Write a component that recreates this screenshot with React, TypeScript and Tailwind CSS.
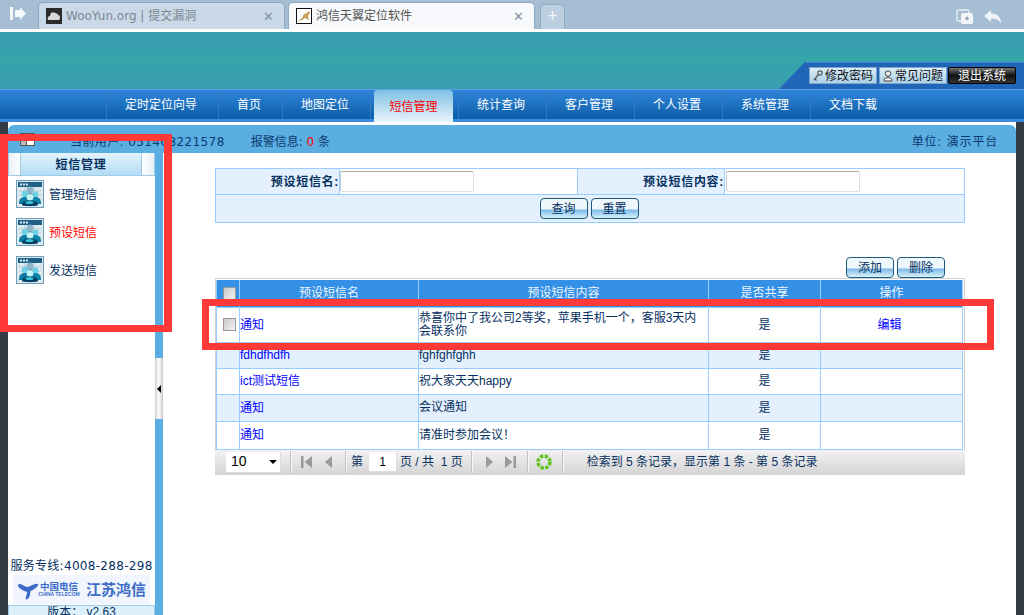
const font = "font-['Liberation_Sans','Noto_Sans_CJK_SC',sans-serif]"

const navItems = ["定时定位向导", "首页", "地图定位", "短信管理", "统计查询", "客户管理", "个人设置", "系统管理", "文档下载"]
const sideItems = ["管理短信", "预设短信", "发送短信"]
const rows = [
  { name: "通知", content: "恭喜你中了我公司2等奖，苹果手机一个，客服3天内会联系你", edit: true, h: "h-[35px]", bg: "bg-white" },
  { name: "fdhdfhdfh", content: "fghfghfghh", h: "h-[26px]", bg: "bg-[#e4f0fe]" },
  { name: "ict测试短信", content: "祝大家天天happy", h: "h-[26px]", bg: "bg-white" },
  { name: "通知", content: "会议通知", h: "h-[27px]", bg: "bg-[#e4f0fe]" },
  { name: "通知", content: "请准时参加会议！", h: "h-[28px]", bg: "bg-white" },
]

function MsnIcon() {
  return (
    <svg width="28" height="28" viewBox="0 0 28 28" className="shrink-0">
      <rect x="0.5" y="0.5" width="27" height="27" fill="#dce9ef" stroke="#6f9db8" />
      <rect x="2" y="2" width="24" height="5" fill="#1d5f86" />
      <rect x="4" y="3.500" width="2" height="2" fill="#ddeeff" />
      <rect x="7" y="3.500" width="2" height="2" fill="#ddeeff" />
      <rect x="10" y="3.500" width="2" height="2" fill="#ddeeff" />
      <path d="M3 11h22M3 15h22M3 19h22M9 7v18M18 7v18" stroke="#a9c4d2" strokeWidth="0.7" />
      <circle cx="14" cy="10" r="3.500" fill="#8db4c8" />
      <path d="M9 17c0-3 2-4 5-4s5 1 5 4z" fill="#6f9fb8" />
      <circle cx="9" cy="14" r="3.200" fill="#6fd0e4" />
      <path d="M3 24c0-5 2-7 6-7s6 2 6 7z" fill="#0b7da3" />
      <circle cx="19.500" cy="14.500" r="3" fill="#6fd0e4" />
      <path d="M14 24c0-5 2-7 5.500-7s5.500 2 5.500 7z" fill="#0a86a8" />
      <circle cx="14" cy="17.500" r="3.300" fill="#c6f5f8" />
      <path d="M6 25c0-3 3-4.500 8-4.500s8 1.500 8 4.500c0 1.500-16 1.500-16 0z" fill="#063f62" />
      <ellipse cx="13.500" cy="22.500" rx="4" ry="1.500" fill="#35c4d8" />
    </svg>
  )
}

function Checkbox() {
  return <span className="block w-[13px] h-[13px] border border-[#999999] bg-gradient-to-br from-[#c8c8c8] to-[#f4f4f4]" />
}

function Btn({ label }: { label: string }) {
  return (
    <button className="w-[48px] h-[21px] rounded-[4px] border border-[#1f5b7c] bg-gradient-to-b from-[#eef8fc] from-50% via-[#84bce8] via-60% to-[#d6f3fc] text-[12px] text-[#06305f] leading-none">
      {label}
    </button>
  )
}

function Tab({ title, active, icon }: { title: string; active?: boolean; icon: React.ReactNode }) {
  return (
    <div
      className={`w-[247px] h-[27px] rounded-t-[5px] flex items-center pl-[7px] pr-[10px] gap-[4px] text-[12px] font-['DejaVu_Sans','Noto_Sans_CJK_SC',sans-serif] border border-b-0 border-[#8fa9c2] ${
        active ? "bg-[#f7f9fc] text-[#555555]" : "bg-[#c9d9e7] text-[#7d8791]"
      }`}
    >
      {icon}
      <span className="flex-1 truncate">{title}</span>
      <span className="text-[13px] font-bold text-[#7f93a6] leading-none">✕</span>
    </div>
  )
}

function Sep() {
  return <span className="w-[2px] h-[22px] bg-[#f6f6f6] border-l border-[#c4c4c4] shrink-0" />
}

export default function App() {
  return (
    <div className={`relative w-[1024px] h-[615px] overflow-hidden flex flex-col bg-white ${font}`}>
      {/* browser tabs */}
      <div className="h-[32px] shrink-0 border-b-[3px] border-white bg-[#a6bed3] flex items-end pl-[38px] gap-[3px]">
        <svg width="18" height="16" viewBox="0 0 18 16" className="absolute left-[10px] top-[6px]">
          <rect x="0" y="1" width="3" height="13" fill="#f4f8fb" />
          <path d="M5 4h5V1l6 6.500L10 14v-3H5z" fill="#f4f8fb" />
        </svg>
        <Tab
          title="WooYun.org | 提交漏洞"
          icon={
            <svg width="16" height="16" viewBox="0 0 16 16" className="shrink-0">
              <rect width="16" height="16" fill="#2b2b2e" />
              <path d="M2 12c-1-3 1-4 2-4 0-3 3-5 5-3 2 0 3 1 3 2 2 0 3 3 1 5z" fill="#d8d8d8" />
            </svg>
          }
        />
        <Tab
          active
          title="鸿信天翼定位软件"
          icon={
            <svg width="16" height="16" viewBox="0 0 16 16" className="shrink-0">
              <rect x="0.5" y="0.5" width="15" height="15" fill="#fff" stroke="#111" />
              <path d="M2 13l4-3 2-4 3-1 1-2 2 2-2 3 1 4-2-1-2-1-3 2z" fill="#c9a15c" />
            </svg>
          }
        />
        <div className="w-[25px] h-[25px] ml-[2px] rounded-t-[5px] border border-b-0 border-[#8fa9c2] bg-[#bccfe0] text-[#f4f8fb] text-[18px] leading-[22px] text-center">
          +
        </div>
        <div className="ml-auto flex items-center gap-[10px] pr-[22px] pb-[4px]">
          <svg width="18" height="16" viewBox="0 0 18 16">
            <rect x="1" y="1" width="12" height="11" rx="1.500" fill="none" stroke="#e8eef4" strokeWidth="1.400" />
            <rect x="5" y="4" width="12" height="11" rx="1.500" fill="#f2f5f8" />
            <path d="M9 9.500h4M11 7.500v4" stroke="#7f8b96" />
          </svg>
          <svg width="18" height="14" viewBox="0 0 18 14">
            <path d="M0 6l7-6v3.500c6 0 10 3 10 10-2-4-5-5-10-5V12z" fill="#f0f4f8" />
          </svg>
        </div>
      </div>

      {/* teal header */}
      <div className="h-[57px] shrink-0 bg-gradient-to-b from-[#3b9cb4] via-[#35a5a9] to-[#3a9db2] flex justify-end items-end">
        <svg width="27" height="27" viewBox="0 0 27 27" className="shrink-0 block">
          <path d="M0 27L26 0h1v27z" fill="#1f66b8" />
        </svg>
        <div className="w-[218px] h-[27px] bg-[#1f66b8] border-t border-[#3f88d8] pt-[4px] pl-[3px] flex text-[12px] leading-[16px]">
          <div className="w-[68px] h-[17px] mr-[2px] flex items-center justify-center gap-[2px] border border-[#7fa6c8] bg-gradient-to-b from-[#d9edf8] to-[#abd0e8] text-[#111111]">
            <svg width="10" height="12" viewBox="0 0 10 12">
              <circle cx="7" cy="3" r="2.200" fill="none" stroke="#555" strokeWidth="1.200" />
              <path d="M5.500 4.500L1 10M2 9l1.500 1.500" stroke="#555" strokeWidth="1.200" fill="none" />
            </svg>
            修改密码
          </div>
          <div className="w-[68px] h-[17px] mr-[1px] flex items-center justify-center gap-[2px] border border-[#7fa6c8] bg-gradient-to-b from-[#d9edf8] to-[#abd0e8] text-[#111111]">
            <svg width="10" height="12" viewBox="0 0 10 12">
              <circle cx="5" cy="3.500" r="2.700" fill="#eee" stroke="#444" />
              <path d="M1 11c0-3 2-3.500 4-3.500S9 8 9 11z" fill="#eee" stroke="#444" />
            </svg>
            常见问题
          </div>
          <div className="w-[68px] h-[17px] flex items-center justify-center rounded-[2px] border border-black bg-gradient-to-b from-[#777777] via-[#111111] to-[#333333] text-white">
            退出系统
          </div>
        </div>
      </div>

      {/* nav */}
      <div className="h-[33px] shrink-0 border-t border-[#5f9fe6] border-b-[3px] border-b-[#3a8ae0] bg-gradient-to-b from-[#2f85da] to-[#075ea6] flex items-stretch pl-[106px] text-[12px]">
        {navItems.map((item) =>
          item === "短信管理" ? (
            <div key={item} className="flex border-l border-[#2f7ac8]">
              <span className="ml-[3px] mr-[5px] -mb-[3px] pt-[1px] w-[79px] rounded-t-[4px] bg-gradient-to-b from-[#7fc0e4] to-[#e8f4fa] text-[#ff0000] flex items-center justify-center">
                {item}
              </span>
            </div>
          ) : (
            <div key={item} className="pl-[18px] pr-[21px] pt-[1px] flex items-center text-white border-l border-[#2f7ac8]">
              {item}
            </div>
          ),
        )}
      </div>

      {/* page body */}
      <div className="flex-1 min-h-0 flex bg-[#333c44]">
        <div className="w-[8px] shrink-0" />
        <div className="flex-1 min-w-0 flex flex-col bg-white pt-[3px]">
          <div className="h-[28px] shrink-0 rounded-t-[6px] bg-[#5aaee2] flex items-center text-[12px] text-[#0c3a6e] pl-[12px] pr-[18px] pt-[5px] font-['DejaVu_Sans','Noto_Sans_CJK_SC',sans-serif]">
            <span className="w-[15px] h-[13px] -mt-[4px] border border-[#555555] bg-white flex mr-[35px]">
              <span className="w-[6px] border-r border-[#555555] bg-[#bbbbbb]" />
            </span>
            <span className="tracking-[0.4px]">当前用户: 051408221578</span>
            <span className="ml-[26px]">
              报警信息: <span className="text-[#ff0000]">0</span> 条
            </span>
            <span className="ml-auto tracking-[0.8px]">单位: 演示平台</span>
          </div>

          <div className="flex-1 min-h-0 flex">
            {/* sidebar */}
            <div className="w-[147px] shrink-0 flex flex-col">
              <div className="h-[23px] shrink-0 flex border-x border-b border-[#9fcbe6] bg-gradient-to-b from-[#e3f3fb] to-[#b4dcf5]">
                <div className="w-[11px] shrink-0 bg-gradient-to-r from-[#e6f0f7] to-white" />
                <div className="flex-1 border-x border-[#9fcbe6] text-center text-[12px] font-bold tracking-[0.7px] leading-[24px] text-[#06305f]">短信管理</div>
                <div className="w-[12px] shrink-0 bg-gradient-to-r from-white to-[#e6f0f7]" />
              </div>
              <div className="flex flex-col gap-[10px] pl-[8px] pt-[4px]">
                {sideItems.map((item) => (
                  <div key={item} className={`flex items-center gap-[5px] text-[12px] ${item === "预设短信" ? "text-[#ff0000]" : "text-[#06305f]"}`}>
                    <MsnIcon />
                    <span className="pt-[2px]">{item}</span>
                  </div>
                ))}
              </div>
              <div className="mt-auto text-center text-[12px] leading-[18px] tracking-[0.3px] text-[#06305f] whitespace-nowrap font-['DejaVu_Sans','Noto_Sans_CJK_SC',sans-serif]">服务专线:4008-288-298</div>
              <div className="mx-[5px] h-[29px] shrink-0 bg-[#f1f6fe] flex items-center px-[4px] text-[#3d6cc8] whitespace-nowrap overflow-hidden">
                <svg width="22" height="22" viewBox="0 0 26 22" preserveAspectRatio="none" className="shrink-0">
                  <path d="M1 6c3-3 8 2 11 2s9-4 13-3c1 2-5 6-9 7l-1 5c-1 3-4 4-5 3l2-7C8 12 1 9 1 6z" fill="#3d6cc8" />
                </svg>
                <span className="w-[38px] shrink-0 flex flex-col items-center ml-[1px] leading-none">
                  <span className="text-[9.500px] font-bold">中国电信</span>
                  <span className="text-[5px] font-bold">CHINA TELECOM</span>
                </span>
                <span className="ml-[8px] text-[15px] font-bold font-['Noto_Sans_CJK_SC',serif]">江苏鸿信</span>
              </div>
              <div className="h-[10px] mt-[1px] shrink-0 overflow-hidden border-x border-t border-[#9fcbe6] bg-[#dcf0fb] text-center text-[12px] leading-[13px] text-[#06305f]">
                版本： v2.63
              </div>
            </div>

            {/* collapse strip */}
            <div className="w-[8px] shrink-0 bg-[#5aaee2]">
              <div className="mt-[205px] h-[61px] bg-gradient-to-r from-[#d0d0d0] via-white to-[#c8c8c8] flex items-center justify-center">
                <span className="w-0 h-0 border-y-[4px] border-y-transparent border-r-[4px] border-r-black" />
              </div>
            </div>

            {/* main */}
            <div className="flex-1 min-w-0 pl-[52px] pt-[15px] text-[12px] text-[#06305f]">
              <div className="w-[750px] h-[55px] border border-[#99ccff] bg-[#e4f0fe] flex flex-col">
                <div className="h-[26px] shrink-0 flex border-b border-[#99ccff]">
                  <div className="w-[123px] shrink-0 flex items-center justify-end font-bold tracking-[0.7px]">预设短信名:</div>
                  <div className="w-[239px] shrink-0 bg-white border-x border-[#99ccff] flex items-center">
                    <span className="block w-[134px] h-[21px] rounded-[2px] border border-[#e0e0e0] border-t-[#aaaaaa] border-l-[#cccccc] bg-white" />
                  </div>
                  <div className="w-[146px] shrink-0 flex items-center justify-end font-bold tracking-[0.7px]">预设短信内容:</div>
                  <div className="flex-1 bg-white border-l border-[#99ccff] flex items-center pl-[1px]">
                    <span className="block w-[134px] h-[21px] rounded-[2px] border border-[#e0e0e0] border-t-[#aaaaaa] border-l-[#cccccc] bg-white" />
                  </div>
                </div>
                <div className="flex-1 flex items-center justify-center gap-[3px] pr-[2px]">
                  <Btn label="查询" />
                  <Btn label="重置" />
                </div>
              </div>

              <div className="w-[730px] mt-[34px] h-[21px] flex justify-end gap-[3px]">
                <Btn label="添加" />
                <Btn label="删除" />
              </div>

              <div className="w-[750px] border-x border-t border-[#d0d0d0] pt-[1px] pr-[1px] bg-white">
                <table className="w-full table-fixed border-collapse">
                  <colgroup>
                    <col className="w-[23px]" />
                    <col className="w-[179px]" />
                    <col className="w-[290px]" />
                    <col className="w-[112px]" />
                    <col />
                  </colgroup>
                  <thead>
                    <tr className="h-[27px] bg-[#3390e6] text-[#eef6ff] font-normal">
                      <th className="border border-[#99ccff] border-t-0 pl-[6px] font-normal">
                        <Checkbox />
                      </th>
                      <th className="border border-[#99ccff] border-t-0 font-normal">预设短信名</th>
                      <th className="border border-[#99ccff] border-t-0 font-normal">预设短信内容</th>
                      <th className="border border-[#99ccff] border-t-0 font-normal">是否共享</th>
                      <th className="border border-[#99ccff] border-t-0 font-normal">操作</th>
                    </tr>
                  </thead>
                  <tbody>
                    {rows.map((r, i) => (
                      <tr key={i} className={`${r.h} ${r.bg}`}>
                        <td className="border border-[#99ccff] pl-[6px]">{i === 0 && <Checkbox />}</td>
                        <td className="border border-[#99ccff] text-[#0000ff]">{r.name}</td>
                        <td className="border border-[#99ccff] leading-[13px]">{r.content}</td>
                        <td className="border border-[#99ccff] text-center">是</td>
                        <td className="border border-[#99ccff] text-center pr-[4px] text-[#0000ff]">{r.edit ? "编辑" : ""}</td>
                      </tr>
                    ))}
                  </tbody>
                </table>
              </div>

              {/* pager */}
              <div className="w-[750px] h-[25px] bg-gradient-to-b from-[#f2f2f2] to-[#d4d4d4] flex items-center pl-[11px] text-[#06305f]">
                <div className="w-[55px] h-[21px] shrink-0 bg-white border-r border-b border-[#dddddd] flex items-center justify-between pl-[5px] pr-[3px] text-[14px] text-black">
                  10
                  <span className="w-0 h-0 border-x-[4px] border-x-transparent border-t-[4px] border-t-black" />
                </div>
                <span className="w-[9px]" />
                <Sep />
                <svg width="11" height="12" viewBox="0 0 11 12" className="ml-[9px] shrink-0">
                  <rect x="0" y="0" width="2.500" height="12" fill="#9a9a9a" />
                  <path d="M11 0v12L3.500 6z" fill="#9a9a9a" />
                </svg>
                <svg width="7" height="12" viewBox="0 0 7 12" className="ml-[13px] shrink-0">
                  <path d="M7 0v12L0 6z" fill="#9a9a9a" />
                </svg>
                <span className="w-[13px]" />
                <Sep />
                <span className="ml-[4px]">第</span>
                <span className="ml-[6px] w-[28px] h-[20px] bg-white border-r border-b border-[#dddddd] flex items-center justify-center text-black shrink-0">1</span>
                <span className="ml-[3px] whitespace-nowrap">页 / 共&nbsp; 1 页</span>
                <span className="w-[8px]" />
                <Sep />
                <svg width="7" height="12" viewBox="0 0 7 12" className="ml-[13px] shrink-0">
                  <path d="M0 0v12L7 6z" fill="#9a9a9a" />
                </svg>
                <svg width="11" height="12" viewBox="0 0 11 12" className="ml-[12px] shrink-0">
                  <path d="M0 0v12L7.500 6z" fill="#9a9a9a" />
                  <rect x="8.500" y="0" width="2.500" height="12" fill="#9a9a9a" />
                </svg>
                <span className="w-[11px]" />
                <Sep />
                <svg width="16" height="16" viewBox="0 0 16 16" className="ml-[7px] shrink-0">
                  <circle cx="8" cy="8" r="6" fill="none" stroke="#5fc41e" strokeWidth="3.500" strokeDasharray="3.300 1.400" />
                </svg>
                <span className="w-[10px]" />
                <Sep />
                <span className="ml-[23px] whitespace-nowrap">检索到 5 条记录，显示第 1 条 - 第 5 条记录</span>
              </div>
            </div>
          </div>
        </div>
        <div className="w-[8px] shrink-0" />
      </div>

      {/* red annotation boxes */}
      <div className="absolute left-0 top-[134px] w-[172px] h-[198px] border-[7px] border-l-[8px] border-r-[8px] border-[#ff3838]" />
      <div className="absolute left-[202px] top-[299px] w-[792px] h-[51px] border-[7px] border-[#ff3838]" />
    </div>
  )
}
